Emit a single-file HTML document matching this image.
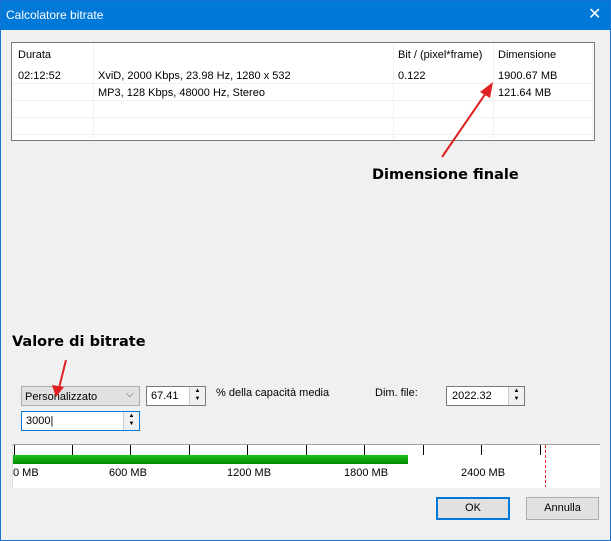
<!DOCTYPE html><html><head><style>
body{margin:0;width:611px;height:541px;overflow:hidden;background:#f0f0f0;font-family:"Liberation Sans",Arial,sans-serif;font-size:11px;color:#000;position:relative}
.a{position:absolute}
.win{position:absolute;left:0;top:0;width:609px;height:539px;border:1px solid #1a73d0}
.title{position:absolute;left:0;top:0;width:611px;height:30px;background:#0078d7;color:#fff;font-size:12px}
.tb{border:1px solid #7a7a7a;background:#fff}
.fld{border:1px solid #7a7a7a;background:#fff;height:18px;box-sizing:border-box}
.spin{position:absolute;right:0;top:0;width:15px;height:100%;border-left:1px solid #ccc;background:#f0f0f0;font-size:6px;text-align:center;line-height:8px}
.bold{font-family:"DejaVu Sans",sans-serif;font-weight:bold;font-size:14.5px}
.btn{border:1px solid #adadad;background:#e1e1e1;text-align:center;line-height:21px;height:21px;box-sizing:content-box}
</style></head><body>
<div class="title"><span class="a" style="left:6px;top:8px">Calcolatore bitrate</span><span class="a" style="left:588px;top:4px;font-size:16px">✕</span></div>
<div class="win"></div>
<div class="a tb" style="left:11px;top:42px;width:582px;height:97px"></div>
<svg class="a" style="left:0;top:0" width="611" height="541">
<g stroke="#f0f0f0" stroke-width="1">
<line x1="93.5" y1="43" x2="93.5" y2="139"/><line x1="393.5" y1="43" x2="393.5" y2="139"/><line x1="493.5" y1="43" x2="493.5" y2="139"/><line x1="592.5" y1="43" x2="592.5" y2="139"/>
<line x1="12" y1="83.5" x2="592" y2="83.5"/><line x1="12" y1="100.5" x2="592" y2="100.5"/><line x1="12" y1="117.5" x2="592" y2="117.5"/><line x1="12" y1="134.5" x2="592" y2="134.5"/>
</g>
</svg>
<span class="a" style="left:18px;top:49px">Durata</span>
<span class="a" style="left:398px;top:49px">Bit / (pixel*frame)</span>
<span class="a" style="left:498px;top:49px">Dimensione</span>
<span class="a" style="left:18px;top:70px">02:12:52</span>
<span class="a" style="left:98px;top:70px">XviD, 2000 Kbps, 23.98 Hz, 1280 x 532</span>
<span class="a" style="left:398px;top:70px">0.122</span>
<span class="a" style="left:498px;top:70px">1900.67 MB</span>
<span class="a" style="left:98px;top:87px">MP3, 128 Kbps, 48000 Hz, Stereo</span>
<span class="a" style="left:498px;top:87px">121.64 MB</span>
<span class="a bold" style="left:372px;top:167px">Dimensione finale</span>
<span class="a bold" style="left:12px;top:334px">Valore di bitrate</span>
<div class="a" style="left:21px;top:386px;width:119px;height:20px;border:1px solid #adadad;background:#e1e1e1;box-sizing:border-box"><span class="a" style="left:3px;top:4px">Personalizzato</span><span class="a" style="left:104px;top:2px;font-size:10px;color:#555">⌵</span></div>
<div class="a fld" style="left:146px;top:386px;width:60px;height:20px"><span class="a" style="left:4px;top:3px">67.41</span><div class="spin">▲<br>▼</div></div>
<span class="a" style="left:216px;top:387px">% della capacità media</span>
<span class="a" style="left:375px;top:387px">Dim. file:</span>
<div class="a fld" style="left:446px;top:386px;width:79px;height:20px"><span class="a" style="left:5px;top:3px">2022.32</span><div class="spin">▲<br>▼</div></div>
<div class="a fld" style="left:21px;top:411px;width:119px;height:20px;border-color:#0078d7"><span class="a" style="left:4px;top:3px">3000|</span><div class="spin" style="border-left:1px solid #ccc">▲<br>▼</div></div>
<div class="a" style="left:12px;top:444px;width:587px;height:43px;background:#fff;border-top:1px solid #a0a0a0;border-left:1px solid #ddd"></div>
<svg class="a" style="left:0;top:0" width="611" height="541">
<g stroke="#000" stroke-width="1">
<line x1="14.5" y1="445" x2="14.5" y2="455"/><line x1="72.5" y1="445" x2="72.5" y2="455"/><line x1="130.5" y1="445" x2="130.5" y2="455"/><line x1="189.5" y1="445" x2="189.5" y2="455"/><line x1="247.5" y1="445" x2="247.5" y2="455"/><line x1="306.5" y1="445" x2="306.5" y2="455"/><line x1="364.5" y1="445" x2="364.5" y2="455"/><line x1="423.5" y1="445" x2="423.5" y2="455"/><line x1="481.5" y1="445" x2="481.5" y2="455"/><line x1="540.5" y1="445" x2="540.5" y2="455"/>
</g>
<defs><linearGradient id="g" x1="0" y1="0" x2="0" y2="1"><stop offset="0" stop-color="#20c020"/><stop offset="1" stop-color="#008a00"/></linearGradient></defs>
<rect x="13" y="455" width="395" height="9" fill="url(#g)"/>
<line x1="545.5" y1="445" x2="545.5" y2="487" stroke="#e02020" stroke-width="1" stroke-dasharray="3,2"/>
</svg>
<span class="a" style="left:13px;top:467px;font-size:11px">0 MB</span>
<span class="a" style="left:109px;top:467px;font-size:11px">600 MB</span>
<span class="a" style="left:227px;top:467px;font-size:11px">1200 MB</span>
<span class="a" style="left:344px;top:467px;font-size:11px">1800 MB</span>
<span class="a" style="left:461px;top:467px;font-size:11px">2400 MB</span>
<div class="a btn" style="left:436px;top:497px;width:70px;border:2px solid #0078d7;height:19px;line-height:19px">OK</div>
<div class="a btn" style="left:526px;top:497px;width:71px">Annulla</div>
<svg class="a" style="left:0;top:0;z-index:5" width="611" height="541">
<line x1="442" y1="157" x2="488" y2="90" stroke="#e02020" stroke-width="2"/>
<polygon points="493,82 480,92 490,98" fill="#e02020"/>
<line x1="66" y1="360" x2="59" y2="388" stroke="#e02020" stroke-width="2"/>
<polygon points="56,397 52,385 64,387" fill="#e02020"/>
</svg>
</body></html>
